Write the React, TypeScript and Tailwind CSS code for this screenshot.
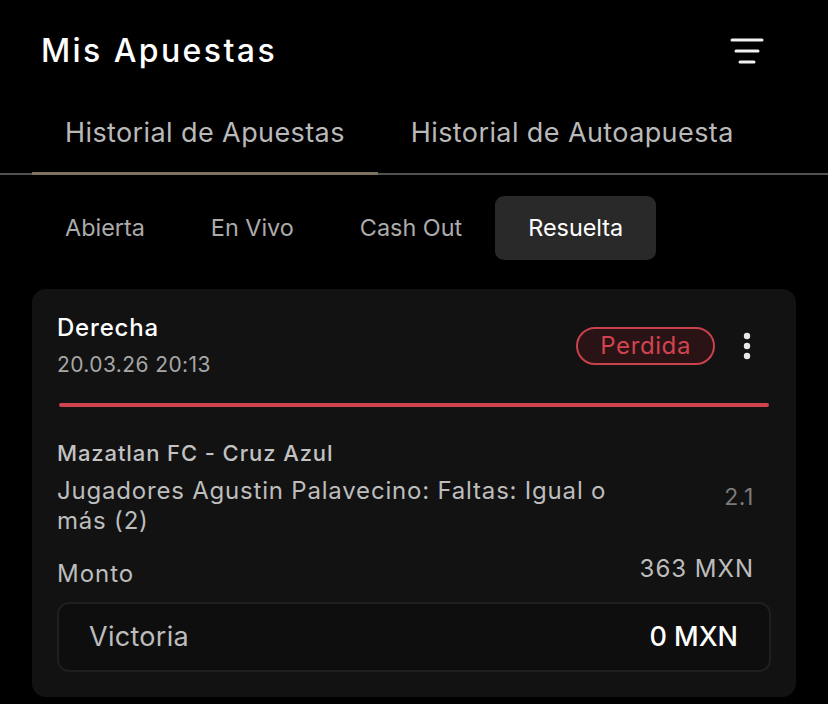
import React, { useState } from 'react';

const subTabs = ['Abierta', 'En Vivo', 'Cash Out', 'Resuelta'];

function FilterIcon() {
  return (
    <svg width="36" height="28" viewBox="0 0 36 28" fill="none" stroke="#f2f2f2" strokeWidth="3" strokeLinecap="round">
      <line x1="3" y1="3" x2="33" y2="3" />
      <line x1="7" y1="14" x2="29" y2="14" />
      <line x1="11" y1="25" x2="25" y2="25" />
    </svg>
  );
}

function KebabIcon() {
  return (
    <svg width="8" height="28" viewBox="0 0 8 28" fill="#e8e8e8">
      <circle cx="4" cy="4" r="3.2" />
      <circle cx="4" cy="14" r="3.2" />
      <circle cx="4" cy="24" r="3.2" />
    </svg>
  );
}

export default function App() {
  const [tab, setTab] = useState(0);
  const [sub, setSub] = useState(3);

  return (
    <div className="min-h-[704px] w-[828px] bg-black font-['Inter','Noto_Sans',sans-serif] text-white">
      {/* header */}
      <div className="flex h-[102px] items-center justify-between pl-[41px] pr-[63px]">
        <h1 className="text-[32px] font-medium tracking-[2.4px]">Mis Apuestas</h1>
        <FilterIcon />
      </div>

      {/* main tabs */}
      <div className="flex h-[73px] border-b-2 border-[#525252]">
        {['Historial de Apuestas', 'Historial de Autoapuesta'].map((t, i) => (
          <button
            key={t}
            onClick={() => setTab(i)}
            className={`-mb-[2px] border-b-[3px] px-[33px] pb-[8px] text-[27px] tracking-[0.4px] text-[#b9b9b9] ${i === 0 ? 'ml-[32px]' : ''} ${tab === i ? 'border-[#7d715f]' : 'border-transparent'}`}
          >
            {t}
          </button>
        ))}
      </div>

      {/* sub tabs */}
      <div className="mt-[21px] flex pl-[32px]">
        {subTabs.map((t, i) => (
          <button
            key={t}
            onClick={() => setSub(i)}
            className={`h-[64px] rounded-[9px] px-[33px] text-[23.4px] ${sub === i ? 'bg-[#292929] text-white' : 'text-[#ababab]'}`}
          >
            {t}
          </button>
        ))}
      </div>

      {/* bet card */}
      <div className="mx-[32px] mt-[29px] rounded-[14px] bg-[#121212] px-[25px] pb-[25px] pt-[24px]">
        <div className="flex items-center justify-between">
          <div className="flex flex-col">
            <span className="text-[24px] leading-[30px] font-medium tracking-[0.8px] text-white">Derecha</span>
            <span className="mt-[8px] text-[21px] leading-[28px] tracking-[0.4px] text-[#a6a6a6]">20.03.26 20:13</span>
          </div>
          <div className="flex items-center gap-[28px] pr-[20px]">
            <span className="rounded-full border-2 border-[#c8424d] bg-[#2a1315] px-[22px] text-[24px] leading-[34px] tracking-[0.6px] text-[#d2434f]">
              Perdida
            </span>
            <KebabIcon />
          </div>
        </div>

        <div className="mr-[2px] ml-[2px] mt-[24px] h-[4px] rounded-full bg-[#d1434f]" />

        <div className="mt-[31px] pr-[17px]">
          <div className="text-[22px] leading-[30px] font-medium tracking-[0.9px] text-[#c2c2c2]">Mazatlan FC - Cruz Azul</div>
          <div className="mt-[8px] flex items-start justify-between">
            <div className="w-[585px] text-[24px] leading-[30px] tracking-[0.8px] text-[#bdbdbd]">
              Jugadores Agustin Palavecino: Faltas: Igual o más (2)
            </div>
            <div className="mt-[6px] text-[23px] leading-[30px] tracking-[0.6px] text-[#7a7a7a]">2.1</div>
          </div>
          <div className="mt-[18px] flex items-start justify-between">
            <span className="mt-[5px] text-[24px] leading-[30px] tracking-[1px] text-[#bdbdbd]">Monto</span>
            <span className="text-[24px] leading-[30px] tracking-[1px] text-[#bdbdbd]">363 MXN</span>
          </div>
        </div>

        <div className="mt-[13px] flex h-[70px] items-center justify-between rounded-[12px] border-2 border-[#1f1f1f] bg-[#0e0e0e] pl-[30px] pr-[31px]">
          <span className="text-[27px] tracking-[0.3px] text-[#bdbdbd]">Victoria</span>
          <span className="text-[27px] font-medium text-white">0 MXN</span>
        </div>
      </div>
    </div>
  );
}
